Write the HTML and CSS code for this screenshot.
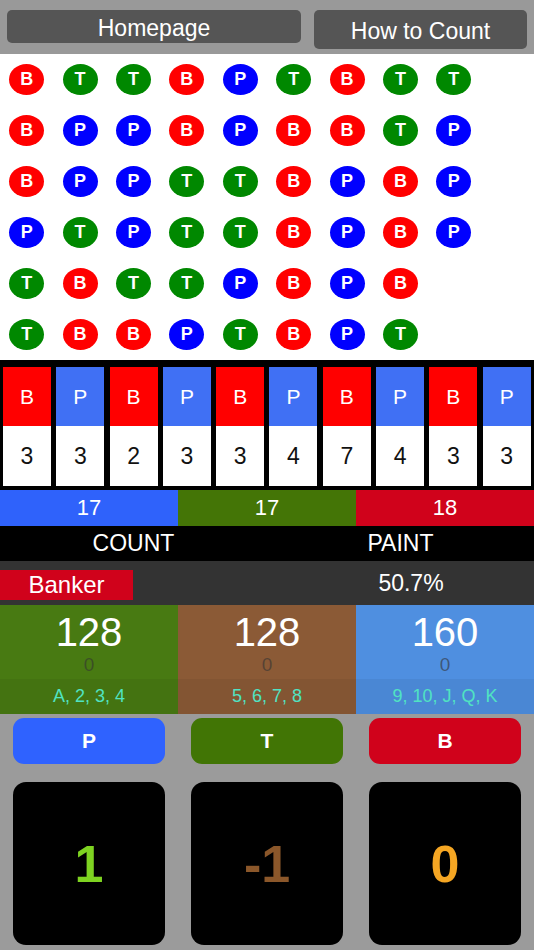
FILE: index.html
```html
<!DOCTYPE html>
<html>
<head>
<meta charset="utf-8">
<link rel="stylesheet" href="styles.css">
</head>
<body>
<div class="app">
  <header class="topbar">
    <button class="nav nav-home">Homepage</button>
    <button class="nav nav-how">How to Count</button>
  </header>

  <section class="road">
    <span class="bead b">B</span><span class="bead b">B</span><span class="bead b">B</span><span class="bead p">P</span><span class="bead t">T</span><span class="bead t">T</span>
    <span class="bead t">T</span><span class="bead p">P</span><span class="bead p">P</span><span class="bead t">T</span><span class="bead b">B</span><span class="bead b">B</span>
    <span class="bead t">T</span><span class="bead p">P</span><span class="bead p">P</span><span class="bead p">P</span><span class="bead t">T</span><span class="bead b">B</span>
    <span class="bead b">B</span><span class="bead b">B</span><span class="bead t">T</span><span class="bead t">T</span><span class="bead t">T</span><span class="bead p">P</span>
    <span class="bead p">P</span><span class="bead p">P</span><span class="bead t">T</span><span class="bead t">T</span><span class="bead p">P</span><span class="bead t">T</span>
    <span class="bead t">T</span><span class="bead b">B</span><span class="bead b">B</span><span class="bead b">B</span><span class="bead b">B</span><span class="bead b">B</span>
    <span class="bead b">B</span><span class="bead b">B</span><span class="bead p">P</span><span class="bead p">P</span><span class="bead p">P</span><span class="bead p">P</span>
    <span class="bead t">T</span><span class="bead t">T</span><span class="bead b">B</span><span class="bead b">B</span><span class="bead b">B</span><span class="bead t">T</span>
    <span class="bead t">T</span><span class="bead p">P</span><span class="bead p">P</span><span class="bead p">P</span>
  </section>

  <section class="cards">
    <div class="card"><div class="card-top cb">B</div><div class="card-num">3</div></div>
    <div class="card"><div class="card-top cp">P</div><div class="card-num">3</div></div>
    <div class="card"><div class="card-top cb">B</div><div class="card-num">2</div></div>
    <div class="card"><div class="card-top cp">P</div><div class="card-num">3</div></div>
    <div class="card"><div class="card-top cb">B</div><div class="card-num">3</div></div>
    <div class="card"><div class="card-top cp">P</div><div class="card-num">4</div></div>
    <div class="card"><div class="card-top cb">B</div><div class="card-num">7</div></div>
    <div class="card"><div class="card-top cp">P</div><div class="card-num">4</div></div>
    <div class="card"><div class="card-top cb">B</div><div class="card-num">3</div></div>
    <div class="card"><div class="card-top cp">P</div><div class="card-num">3</div></div>
  </section>

  <section class="totals">
    <div class="total tot-p">17</div>
    <div class="total tot-t">17</div>
    <div class="total tot-b">18</div>
  </section>

  <section class="heads">
    <div class="head">COUNT</div>
    <div class="head">PAINT</div>
  </section>

  <section class="status">
    <div class="banker">Banker</div>
    <div class="pct">50.7%</div>
  </section>

  <section class="groups">
    <div class="group g-low">
      <div class="g-main"><div class="g-num">128</div><div class="g-sub">0</div></div>
      <div class="g-label">A, 2, 3, 4</div>
    </div>
    <div class="group g-mid">
      <div class="g-main"><div class="g-num">128</div><div class="g-sub">0</div></div>
      <div class="g-label">5, 6, 7, 8</div>
    </div>
    <div class="group g-high">
      <div class="g-main"><div class="g-num">160</div><div class="g-sub">0</div></div>
      <div class="g-label">9, 10, J, Q, K</div>
    </div>
  </section>

  <section class="controls">
    <button class="pick pick-p">P</button>
    <button class="pick pick-t">T</button>
    <button class="pick pick-b">B</button>
    <div class="score sc-p">1</div>
    <div class="score sc-t">-1</div>
    <div class="score sc-b">0</div>
  </section>
</div>
</body>
</html>
```

FILE: styles.css
```css
* { box-sizing: border-box; }
html, body { margin: 0; padding: 0; }
body {
  background: #9b9b9b;
  font-family: "Liberation Sans", Arial, sans-serif;
}
.app { width: 534px; height: 950px; overflow: hidden; }

.topbar {
  height: 54px;
  background: #999999;
  display: flex;
  align-items: flex-start;
  padding: 10px 7px 0 7px;
  gap: 13px;
}
.nav {
  border: none;
  background: #555555;
  color: #ffffff;
  font-family: "Liberation Sans", Arial, sans-serif;
  font-size: 23px;
  border-radius: 5px;
  padding: 0;
  margin: 0;
}
.nav-home { width: 294px; height: 33px; padding-top: 3px; }
.nav-how { width: 213px; height: 39px; padding-top: 3px; }

.road {
  height: 306px;
  background: #ffffff;
  display: grid;
  grid-template-columns: repeat(9, 53.4px);
  grid-template-rows: repeat(6, 51px);
  grid-auto-flow: column;
  justify-items: center;
  align-items: center;
}
.bead {
  width: 35px;
  height: 31px;
  border-radius: 50%;
  color: #ffffff;
  font-weight: bold;
  font-size: 18px;
  display: flex;
  align-items: center;
  justify-content: center;
}
.bead.b { background: #ff0000; }
.bead.p { background: #0000ff; }
.bead.t { background: #008800; }

.cards {
  height: 130px;
  background: #000000;
  padding: 7px 3px 4px 3px;
  display: grid;
  grid-template-columns: repeat(10, 48px);
  column-gap: 5.3px;
}
.card { display: flex; flex-direction: column; }
.card-top {
  height: 59px;
  color: #ffffff;
  font-size: 21px;
  display: flex;
  align-items: center;
  justify-content: center;
}
.cb { background: #ff0000; }
.cp { background: #4070f4; }
.card-num {
  height: 60px;
  background: #ffffff;
  color: #111111;
  font-size: 23px;
  display: flex;
  align-items: center;
  justify-content: center;
}

.totals {
  height: 36px;
  display: grid;
  grid-template-columns: 178px 178px 178px;
}
.total {
  color: #ffffff;
  font-size: 22px;
  display: flex;
  align-items: center;
  justify-content: center;
}
.tot-p { background: #2f62fb; }
.tot-t { background: #447506; }
.tot-b { background: #d0021b; }

.heads {
  height: 35px;
  background: #000000;
  display: grid;
  grid-template-columns: 267px 267px;
}
.head {
  color: #ffffff;
  font-size: 23px;
  display: flex;
  align-items: center;
  justify-content: center;
}

.status {
  height: 44px;
  background: #333333;
  display: flex;
  align-items: flex-start;
}
.banker {
  margin-top: 9px;
  width: 133px;
  height: 30px;
  background: #d0021b;
  color: #ffffff;
  font-size: 24px;
  display: flex;
  align-items: center;
  justify-content: center;
}
.pct {
  margin-left: auto;
  width: 246px;
  height: 44px;
  color: #ffffff;
  font-size: 23px;
  display: flex;
  align-items: center;
  justify-content: center;
}

.groups {
  height: 109px;
  display: grid;
  grid-template-columns: 178px 178px 178px;
}
.group { display: flex; flex-direction: column; }
.g-low { background: #487a12; }
.g-mid { background: #8b5a36; }
.g-high { background: #4f8fe0; }
.g-main {
  height: 74px;
  display: flex;
  flex-direction: column;
  align-items: center;
}
.g-num {
  color: #ffffff;
  font-size: 40px;
  line-height: 44px;
  margin-top: 5px;
}
.g-sub {
  color: rgba(51, 51, 51, 0.6);
  font-size: 19px;
  line-height: 22px;
}
.g-label {
  height: 35px;
  background: rgba(0, 0, 0, 0.05);
  color: #50e3c2;
  font-size: 18px;
  display: flex;
  align-items: center;
  justify-content: center;
}

.controls {
  display: grid;
  grid-template-columns: 152px 152px 152px;
  grid-template-rows: 46px 163px;
  column-gap: 26px;
  row-gap: 18px;
  padding: 4px 0 0 13px;
}
.pick {
  border: none;
  border-radius: 11px;
  color: #ffffff;
  font-family: "Liberation Sans", Arial, sans-serif;
  font-weight: bold;
  font-size: 21px;
  padding: 0;
  margin: 0;
}
.pick-p { background: #2f62ff; }
.pick-t { background: #417505; }
.pick-b { background: #d0021b; }
.score {
  background: #000000;
  border-radius: 13px;
  font-weight: bold;
  font-size: 52px;
  display: flex;
  align-items: center;
  justify-content: center;
}
.sc-p { color: #7ed321; }
.sc-t { color: #8b572a; }
.sc-b { color: #f5a623; }
```
